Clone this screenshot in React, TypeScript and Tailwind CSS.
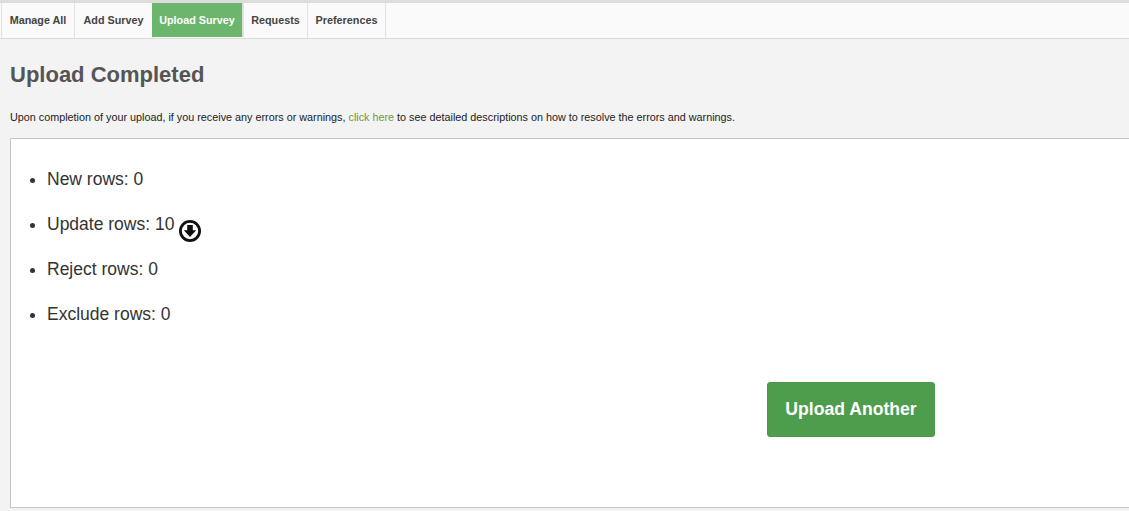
import React from "react";

type Tab = {
  label: string;
  active?: boolean;
  width: string;
};

const tabs: Tab[] = [
  { label: "Manage All", width: "w-[74px]" },
  { label: "Add Survey", width: "w-[79px]" },
  { label: "Upload Survey", width: "w-[91px]", active: true },
  { label: "Requests", width: "w-[65px]" },
  { label: "Preferences", width: "w-[79px]" },
];

const DownloadIcon = () => (
  <svg width="24" height="24" viewBox="0 0 24 24" className="mt-[9px] ml-[4px] shrink-0">
    <circle cx="12" cy="12" r="9.6" fill="none" stroke="#111" strokeWidth="2.8" />
    <path d="M9.2 6h5.6v5.2h3.4L12 18 5.8 11.2h3.4z" fill="#111" />
  </svg>
);

const App: React.FC = () => {
  return (
    <div className="w-[1129px] h-[511px] overflow-hidden bg-[#f3f3f3] font-['Liberation_Sans',Arial,sans-serif]">
      <div className="h-[3px] bg-[#dddddd]" />
      <div className="h-[36px] bg-[#fafafa] border-b border-[#dcdcdc] flex pl-[1px]">
        {tabs.map((tab) => (
          <div
            key={tab.label}
            className={
              tab.active
                ? `${tab.width} h-[34px] flex items-center justify-center text-[10.8px] font-bold bg-[#6cb56c] text-white border-r border-[#dcdcdc]`
                : `${tab.width} h-[35px] flex items-center justify-center text-[10.8px] font-bold text-[#444444] border-x border-[#e2e2e2] -mr-px`
            }
          >
            {tab.label}
          </div>
        ))}
      </div>

      <h1 className="mt-[22px] ml-[10px] text-[22px] leading-[28px] font-bold text-[#555555]">Upload Completed</h1>
      <p className="mt-[21px] ml-[10px] text-[10.8px] leading-[14px] text-[#222222]">
        Upon completion of your upload, if you receive any errors or warnings,{" "}
        <a className="text-[#6f9a3a]">click here</a> to see detailed descriptions on how to resolve the errors and warnings.
      </p>

      <div className="mt-[14px] ml-[10px] w-[1130px] h-[370px] bg-white border border-[#c4c4c4] flex flex-col">
        <ul className="mt-[26px] ml-[36px] flex flex-col gap-[17px] list-disc text-[17.5px] leading-[28px] text-[#333333]">
          <li>New rows: 0</li>
          <li>
            <div className="flex h-[28px]">
              Update rows: 10
              <DownloadIcon />
            </div>
          </li>
          <li>Reject rows: 0</li>
          <li>Exclude rows: 0</li>
        </ul>
        <button className="mt-[54px] ml-[756px] w-[168px] h-[55px] rounded-[3px] bg-[#4d9d4d] border border-[#4a984a] text-white text-[17.6px] font-bold">
          Upload Another
        </button>
      </div>
    </div>
  );
};

export default App;
